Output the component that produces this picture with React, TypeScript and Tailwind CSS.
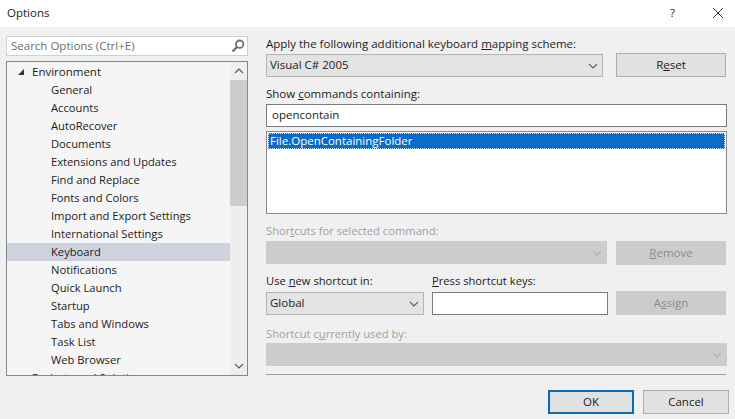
import React from 'react';

const treeItems = [
  'General',
  'Accounts',
  'AutoRecover',
  'Documents',
  'Extensions and Updates',
  'Find and Replace',
  'Fonts and Colors',
  'Import and Export Settings',
  'International Settings',
  'Keyboard',
  'Notifications',
  'Quick Launch',
  'Startup',
  'Tabs and Windows',
  'Task List',
  'Web Browser',
];

function Chevron({ className }: { className: string }) {
  return (
    <svg width="10" height="6" viewBox="0 0 10 6" fill="none" className={className}>
      <path d="M1 1l4 4 4-4" stroke="currentColor" strokeWidth="1.1" />
    </svg>
  );
}

function Combo({ text, width, disabled }: { text?: string; width: string; disabled?: boolean }) {
  return (
    <div
      className={`${width} h-[23px] flex items-center justify-between pl-[3px] pr-[4px] border ${
        disabled ? 'bg-[#cccccc] border-[#cccccc]' : 'bg-[#e3e3e3] border-[#b4b4b4]'
      }`}
    >
      <span className="text-[#1c1c1c] pb-[2px]">{text}</span>
      <Chevron className={disabled ? 'text-[#b0b0b0]' : 'text-[#5f5f5f]'} />
    </div>
  );
}

function Button({ children, disabled }: { children: React.ReactNode; disabled?: boolean }) {
  return (
    <div
      className={`w-[110px] h-[24px] flex items-center justify-center border ${
        disabled ? 'bg-[#cccccc] border-[#cccccc] text-[#8a8a8a]' : 'bg-[#e1e1e1] border-[#adadad] text-[#1c1c1c]'
      }`}
    >
      {children}
    </div>
  );
}

export default function App() {
  return (
    <div className="w-[735px] h-[419px] overflow-hidden flex flex-col bg-[#f0f0f0] text-[11.5px] leading-[16px] text-[#1c1c1c] font-['Open_Sans','Noto_Sans',sans-serif]">
      <div className="h-[27px] shrink-0 bg-white flex items-center justify-between pl-[7px] pr-[11px] pb-[2px]">
        <span>Options</span>
        <div className="flex items-center gap-[37px]">
          <span>?</span>
          <svg width="12" height="12" viewBox="0 0 12 12" fill="none">
            <path d="M1 1l10 10M11 1L1 11" stroke="#333333" strokeWidth="1" />
          </svg>
        </div>
      </div>

      <div className="flex flex-1 min-h-0">
        <div className="w-[242px] ml-[6px] mt-[9px] shrink-0 flex flex-col">
          <div className="h-[20px] flex items-center justify-between bg-white border border-[#cfcfcf] pl-[4px] pr-[2px]">
            <span className="text-[#6d6d6d]">Search Options (Ctrl+E)</span>
            <svg width="14" height="14" viewBox="0 0 14 14" fill="none">
              <circle cx="8.7" cy="5.2" r="3.7" stroke="#6f6f6f" strokeWidth="1.8" />
              <path d="M6 8L1.5 12.5" stroke="#6f6f6f" strokeWidth="2.4" />
            </svg>
          </div>
          <div className="mt-[5px] h-[315px] flex border border-[#828790] bg-[#f5f5f5] text-[11.2px]">
            <div className="flex-1 min-w-0 overflow-hidden pt-[1px]">
              <div className="h-[18px] flex items-center pl-[10px]">
                <svg width="8" height="8" viewBox="0 0 8 8" className="mr-[7px]">
                  <path d="M7 1v6H1z" fill="#333333" />
                </svg>
                <span className="text-[11.5px]">Environment</span>
              </div>
              {treeItems.map((item) => (
                <div
                  key={item}
                  className={`h-[18px] flex items-center pl-[44px] ${item === 'Keyboard' ? 'bg-[#cfd3e0]' : ''}`}
                >
                  {item}
                </div>
              ))}
              <div className="h-[18px] flex items-center pl-[25px]">Projects and Solutions</div>
            </div>
            <div className="w-[17px] shrink-0 flex flex-col bg-[#eeeeee]">
              <div className="h-[18px] flex items-center justify-center">
                <Chevron className="text-[#555555] rotate-180" />
              </div>
              <div className="h-[126px] bg-[#cdcdcd]" />
              <div className="flex-1 flex items-end justify-center pb-[6px]">
                <Chevron className="text-[#555555]" />
              </div>
            </div>
          </div>
        </div>

        <div className="w-[461px] ml-[18px] shrink-0 flex flex-col">
          <div className="mt-[9px] h-[16px]">
            Apply the following additional keyboard <u>m</u>apping scheme:
          </div>
          <div className="mt-[2px] flex justify-between items-start">
            <Combo text="Visual C# 2005" width="w-[337px]" />
            <div className="mr-[1px] -mt-[1px]">
              <Button>
                <span>
                  R<u>e</u>set
                </span>
              </Button>
            </div>
          </div>
          <div className="mt-[9px] h-[16px]">
            Show <u>c</u>ommands containing:
          </div>
          <div className="mt-[2px] h-[23px] flex items-center bg-white border border-[#7a7a7a] pl-[5px] pb-[2px]">opencontain</div>
          <div className="mt-[4px] h-[83px] bg-white border border-[#828790] p-[1px]">
            <div className="h-[16px] flex items-center pl-[1px] bg-[#0a6cc4] text-white border border-dotted border-[#cfe2f3]">
              File.OpenContainingFolder
            </div>
          </div>

          <div className="mt-[9px] h-[16px] text-[11.2px] text-[#a0a0a0]">
            Shor<u>t</u>cuts for selected command:
          </div>
          <div className="mt-[2px] flex justify-between items-start">
            <Combo width="w-[341px]" disabled />
            <div className="mr-[1px]">
              <Button disabled>
                <span>
                  <u>R</u>emove
                </span>
              </Button>
            </div>
          </div>

          <div className="mt-[8px] flex h-[16px] text-[11.2px]">
            <div className="w-[166px]">
              Use <u>n</u>ew shortcut in:
            </div>
            <div>
              <u>P</u>ress shortcut keys:
            </div>
          </div>
          <div className="mt-[3px] flex items-start">
            <Combo text="Global" width="w-[158px]" />
            <div className="ml-[8px] w-[176px] h-[23px] bg-white border border-[#7a7a7a]" />
            <div className="ml-[8px] -mt-[1px]">
              <Button disabled>
                <span>
                  A<u>s</u>sign
                </span>
              </Button>
            </div>
          </div>

          <div className="mt-[11px] h-[16px] text-[11.2px] text-[#a0a0a0]">
            Shortcut c<u>u</u>rrently used by:
          </div>
          <div className="mt-[1px]">
            <Combo width="w-[461px]" disabled />
          </div>
          <div className="mt-[8px] mr-[1px] border-t border-[#a0a0a0]" />

          <div className="mt-[15px] flex gap-[9px] w-[181px] ml-[282px]">
            <div className="w-[86px] h-[24px] shrink-0 flex items-center justify-center bg-[#e1e1e1] border-2 border-[#0a6cb4]">OK</div>
            <div className="w-[86px] h-[24px] shrink-0 flex items-center justify-center bg-[#e1e1e1] border border-[#adadad]">Cancel</div>
          </div>
        </div>
      </div>
    </div>
  );
}
